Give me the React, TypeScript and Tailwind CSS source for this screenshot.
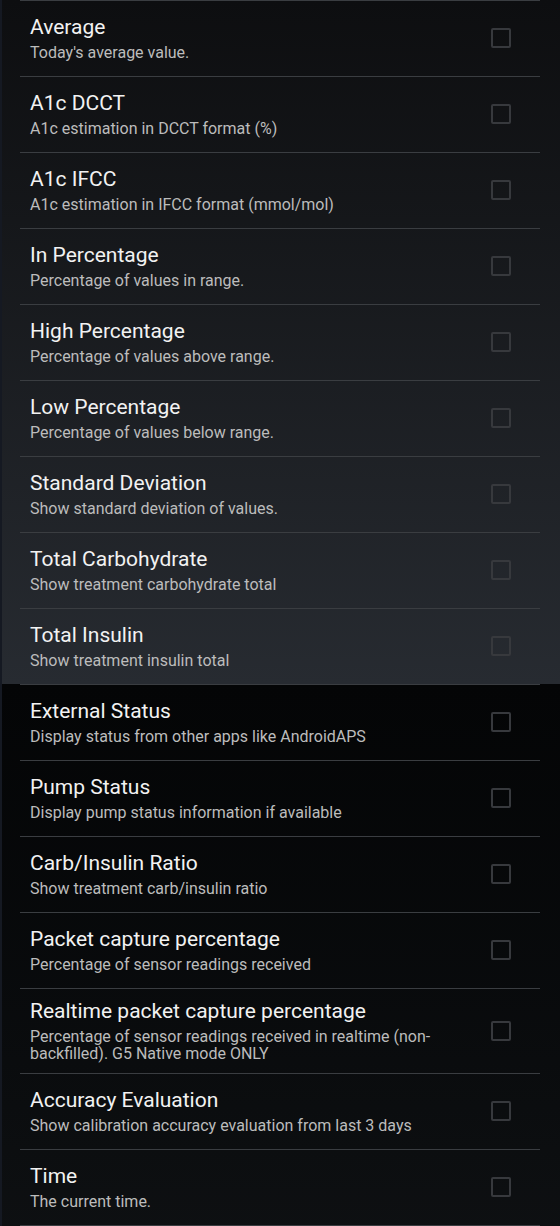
import React from "react";

interface Pref {
  title: string;
  summary: string;
}

const upper: Pref[] = [
  { title: "Average", summary: "Today's average value." },
  { title: "A1c DCCT", summary: "A1c estimation in DCCT format (%)" },
  { title: "A1c IFCC", summary: "A1c estimation in IFCC format (mmol/mol)" },
  { title: "In Percentage", summary: "Percentage of values in range." },
  { title: "High Percentage", summary: "Percentage of values above range." },
  { title: "Low Percentage", summary: "Percentage of values below range." },
  { title: "Standard Deviation", summary: "Show standard deviation of values." },
  { title: "Total Carbohydrate", summary: "Show treatment carbohydrate total" },
  { title: "Total Insulin", summary: "Show treatment insulin total" },
];

const lower: Pref[] = [
  { title: "External Status", summary: "Display status from other apps like AndroidAPS" },
  { title: "Pump Status", summary: "Display pump status information if available" },
  { title: "Carb/Insulin Ratio", summary: "Show treatment carb/insulin ratio" },
  { title: "Packet capture percentage", summary: "Percentage of sensor readings received" },
  {
    title: "Realtime packet capture percentage",
    summary: "Percentage of sensor readings received in realtime (non-backfilled). G5 Native mode ONLY",
  },
  { title: "Accuracy Evaluation", summary: "Show calibration accuracy evaluation from last 3 days" },
  { title: "Time", summary: "The current time." },
];

const Divider = () => <div className="ml-5 mr-5 h-px bg-[#3a3d41]" />;

const Row = ({ item }: { item: Pref }) => (
  <div className="flex min-h-[75px] items-center pt-[10px] pb-[11px] pl-[30px] pr-[49px]">
    <div className="flex-1 pr-[40px]">
      <div className="text-[21px] leading-[25px] text-[#f2f2f2]">{item.title}</div>
      <div className="mt-[4px] text-[16px] leading-[17px] text-[#bcbcbc]">{item.summary}</div>
    </div>
    <div className="h-5 w-5 shrink-0 rounded-[2px] border-2 border-[#37393d]" />
  </div>
);

export default function App() {
  return (
    <div className="relative w-[560px] h-[1226px] overflow-hidden font-['Roboto',sans-serif]">
      {/* first screen, lighter gradient */}
      <div className="bg-gradient-to-b from-[#0d0e10] to-[#272b31]">
        {upper.map((item) => (
          <React.Fragment key={item.title}>
            <Divider />
            <Row item={item} />
          </React.Fragment>
        ))}
      </div>
      {/* second screen, darker gradient */}
      <div className="bg-gradient-to-b from-[#040506] to-[#1d2023] h-full">
        {lower.map((item) => (
          <React.Fragment key={item.title}>
            <Divider />
            <Row item={item} />
          </React.Fragment>
        ))}
        <Divider />
      </div>
      <div className="absolute left-0 top-0 h-full w-[2px] bg-[#151922]" />
    </div>
  );
}
